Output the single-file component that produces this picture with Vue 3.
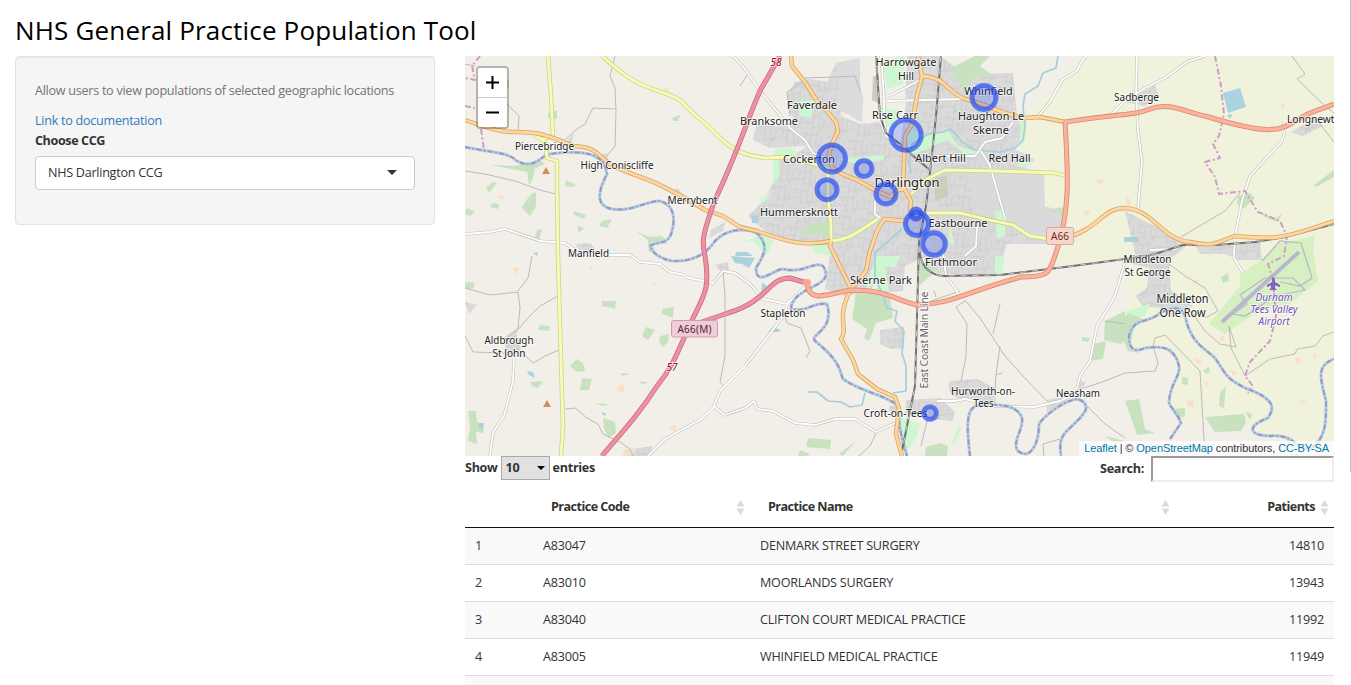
<script setup>
const rows = [
  { n: 1, code: 'A83047', name: 'DENMARK STREET SURGERY', patients: 14810 },
  { n: 2, code: 'A83010', name: 'MOORLANDS SURGERY', patients: 13943 },
  { n: 3, code: 'A83040', name: 'CLIFTON COURT MEDICAL PRACTICE', patients: 11992 },
  { n: 4, code: 'A83005', name: 'WHINFIELD MEDICAL PRACTICE', patients: 11949 },
]

const practices = [
  [367, 102.5, 13.5], [399, 112.5, 8], [362, 133.7, 10], [421, 138, 10],
  [441, 79, 15.2], [519, 41.5, 12], [451, 158, 5], [452, 168, 11.5],
  [469, 188, 11.3], [465, 357, 6.3],
]

// text, centre x, baseline y, drawn width, size
const places = [
  ['Piercebridge', 79.5, 94, 59, 11], ['High Coniscliffe', 152, 112.5, 73, 11],
  ['Merrybent', 227.5, 148, 50, 11], ['Faverdale', 347, 52.5, 50, 11],
  ['Branksome', 304, 69, 58, 11], ['Cockerton', 344, 107, 52, 11],
  ['Hummersknott', 334, 160, 78, 11], ['Rise Carr', 430, 63, 46, 11],
  ['Harrowgate', 441, 10, 61, 11], ['Hill', 441, 24, 16, 11],
  ['Whinfield', 523.5, 39, 48.5, 11], ['Haughton Le', 526, 64, 66, 11],
  ['Skerne', 526, 78, 36, 11], ['Albert Hill', 475.5, 106, 50.5, 11],
  ['Red Hall', 544.5, 106, 42, 11], ['Darlington', 442, 131, 65, 13],
  ['Eastbourne', 493, 171, 59, 11], ['Firthmoor', 486, 210, 52, 11],
  ['Skerne Park', 416, 228, 62, 11], ['Stapleton', 318, 261, 45, 10.5],
  ['Manfield', 123.5, 200.5, 41, 10.5], ['Aldbrough', 44, 288, 49, 10.5],
  ['St John', 44, 301, 33, 10.5], ['Sadberge', 671.5, 44.5, 45, 10.5],
  ['Longnewton', 852, 66.5, 60, 10.5], ['Middleton', 682.5, 206.5, 48, 10.5],
  ['St George', 682.5, 219.5, 46, 10.5], ['Middleton', 717.5, 247, 52, 12],
  ['One Row', 717.5, 261, 46, 12], ['Hurworth-on-', 518, 338.5, 64, 10.5],
  ['Tees', 518.5, 351, 20, 10.5], ['Neasham', 613, 341, 44, 10.5],
  ['Croft-on-Tees', 430.5, 361, 64, 10.5], ['Eryholme', 575, 408, 44, 10.5],
]
const airport = [['Durham', 809, 244.5, 37], ['Tees Valley', 809, 256.5, 47], ['Airport', 809, 268.5, 31]]

const built = [
  'M371 7L395 2 395 30 398 42 397 66 371 52 360 30Z',
  'M322 40L330 26 345 23 365 26 374 33 376 60 395 68 415 66 420 80 435 90 440 56 442 0 452 0 475 0 500 18 548 17 552 60 560 80 548 92 570 104 560 112 578 118 579 150 598 155 596 184 582 188 542 188 532 218 500 219 472 217 458 202 440 210 438 235 422 236 412 222 405 235 380 240 360 233 364 205 366 190 330 187 300 175 283 160 298 145 309 125 314 102 330 98 342 90 305 92 288 84 291 68 310 70 330 66 322 50Z',
  'M100 87L109 77 105 92Z', 'M110 188L125 187 133 197 118 199Z', 'M38 282L50 274 56 292 44 303Z',
  'M246 174L260 166 258 175 244 182Z', 'M250 209L263 206 264 217 258 218Z', 'M0 246L12 249 4 258Z',
  'M484 325L512 323 530 332 531 348 494 344 484 335Z', 'M441 344L475 342 490 356 487 365 440 360Z',
  'M582 344L605 339 600 348 582 356Z', 'M612 323L621 327 615 335Z', 'M424 350L435 349 433 359 425 357Z',
  'M660 46L690 29 694 40 680 50Z', 'M826 76L850 62 858 70 838 80Z',
  'M660 206L672 206 660 155 690 170 725 187 704 204 706 234 728 250 716 254 678 250 670 240 682 232 684 212Z',
  'M730 189L795 186 797 204 774 204 760 198 735 198Z', 'M160 394L187 390 186 400 158 400Z',
  'M415 274L439 271 439 292 426 293 415 288Z', 'M206 135L212 132 220 140 216 144Z', 'M136 99L142 97 144 105Z',
]
const woods = [
  'M486 12L510 0 525 0 515 10 528 20 510 22 497 34Z', 'M62 113L71 106 68 122 64 130Z',
  'M25 109L50 110 75 103 80 108 62 116 42 112Z', 'M66 138L71 136 71 150 65 160 57 152 60 146Z',
  'M72 174L77 173 74 184 69 184Z', 'M101 124L111 129 107 131 100 130Z', 'M109 155L121 159 119 163 108 158Z',
  'M113 170L119 172 113 177Z', 'M137 165L147 163 142 172 134 170Z', 'M21 132L28 126 32 127 24 137Z',
  'M2 152L10 156 5 160 0 158Z', 'M28 147L34 148 33 153 25 151Z', 'M171 175L186 182 190 195 184 196 183 184Z',
  'M137 245L151 245 150 253 137 250Z', 'M181 271L190 274 183 284 177 280Z', 'M195 280L204 278 203 286 198 291 194 286Z',
  'M197 253L209 251 208 262 197 258Z', 'M75 269L85 270 84 275 73 274Z', 'M112 303L118 307 120 315 112 316 105 310Z',
  'M117 322L127 323 124 334 115 334Z', 'M155 317L166 318 157 320Z', 'M175 325L184 327 176 328Z',
  'M65 326L78 325 73 332 67 330Z', 'M3 355L11 355 12 365 18 370 19 377 11 376 12 388 3 385 5 370Z',
  'M138 362L150 366 151 377 143 382 139 372Z', 'M130 347L144 348 138 350Z', 'M343 382L366 384 365 393 341 391Z',
  'M335 394L345 398 342 400 333 400Z', 'M374 398L392 384 383 394 378 400Z',
  'M391 236L410 235 425 240 428 262 411 267 404 285 399 282 402 273 387 263Z',
  'M461 391L475 387 483 390 482 400 460 400Z', 'M640 265L660 255 662 281 656 288 639 284Z',
  'M628 288L641 285 638 303 625 305Z', 'M617 281L625 282 623 286 617 285Z', 'M740 361L779 358 781 366 776 375 750 376Z',
  'M660 345L674 343 680 373 690 377 672 379Z', 'M755 337L761 330 759 352 754 350Z',
  'M657 264L664 257 680 264 670 268 665 290 675 297 663 295 657 282Z', 'M708 353L720 352 720 360 716 362 708 358Z',
  'M717 321L723 322 723 329 717 328Z', 'M738 314L744 311 745 316 741 318Z', 'M849 129L869 114 869 121 851 131Z',
  'M773 140L785 137 790 142 778 153 772 148Z', 'M793 155L810 163 818 157 812 166 800 161Z',
  'M84 55L92 55 92 63 83 62Z', 'M207 62L215 59 213 65 208 65Z', 'M455 204L472 214 454 230Z', 'M756 221L763 217 764 225 758 227Z',
  'M342 167L364 166 364 180 338 178Z', 'M580 155L598 151 598 157Z', 'M640 380L660 385 650 387Z', 'M181 181L197 180 203 188 190 187Z',
  'M780 355L787 358 785 364Z', 'M10 227L8 233 0 232 0 226Z', 'M38 23L44 24 44 32 39 33Z',
]
const parks = [
  'M334 45L350 44 346 62 334 60Z', 'M311 92L330 92 332 101 314 103 315 120 308 127 308 102Z',
  'M292 144L308 134 300 146Z', 'M372 103L400 101 420 99 418 104 388 107Z', 'M440 68L460 80 483 74 493 90 520 98 500 98 482 84 445 100Z',
  'M418 5L440 0 438 28 422 33 420 18Z', 'M412 200L435 200 430 212 420 210 424 238 411 240 412 224 400 237 406 215Z',
  'M280 185L300 178 308 185 302 200 288 185Z', 'M345 188L366 190 366 200 350 197Z', 'M530 155L541 155 540 180 532 182Z',
  'M556 62L562 58 560 85 554 92Z', 'M433 360L455 368 452 380 442 395 433 372Z', 'M530 200L540 200 537 218 530 217Z',
  'M485 170L490 188 484 188Z', 'M560 104L568 105 560 112 550 110Z', 'M415 50L436 55 430 72 420 70Z', 'M486 392L493 370 497 372 490 387Z',
  'M661 255L685 248 680 260 662 263Z',
]
const lakes = [
  'M758 37L775 32 781 51 763 57Z', 'M762 59L768 58 765 63Z', 'M266 200L290 202 284 212 277 208 270 207Z',
  'M297 226L302 230 300 236 296 237Z', 'M308 271L316 274 313 276 303 276Z', 'M286 160L294 159 293 167 287 167Z',
  'M659 181L674 181 674 186 659 186Z', 'M62 315L68 316 70 322 64 319Z', 'M14 367L19 367 18 373 14 372Z', 'M68 197L73 196 72 200Z',
  'M271 196L282 196 288 200 270 200Z', 'M136 356L142 358 139 360Z',
]
const peach = [
  'M33 139L39 140 38 144 34 143Z', 'M198 33L203 32 203 37 199 37Z', 'M93 139L96 144 92 144Z', 'M48 211L54 212 52 218 49 216Z',
  'M187 226L191 228 189 231Z', 'M152 331L158 329 160 335 154 336Z', 'M205 371L211 369 211 376 205 374Z', 'M136 283L140 284 137 285Z',
  'M628 124L641 124 636 128Z', 'M618 155L626 155 621 160Z', 'M661 141L666 144 665 149 661 148Z', 'M728 225L734 223 732 228Z',
  'M729 302L738 304 732 309Z', 'M738 325L745 327 741 330Z', 'M722 344L729 345 728 351 722 350Z', 'M755 281L759 280 760 285 755 285Z',
  'M765 313L772 317 768 320Z', 'M830 301L838 304 832 309Z', 'M848 298L853 301 849 303Z', 'M836 343L842 346 836 348Z',
  'M815 47L820 48 818 53Z', 'M160 395L172 393 165 400 157 400Z', 'M124 212L127 211 127 215Z',
]
const minor = [
  'M150 0L145 20 150 32 151 55 150 90 142 100', 'M100 84L112 73 120 68 128 52 150 53', 'M0 115L20 118 50 125 75 134 90 138',
  'M42 48L54 60 53 76', 'M67 200L63 222 53 235', 'M0 232L25 239 53 236 55 252 53 272 42 282', 'M93 240L75 250 62 263 50 277',
  'M0 280L8 296 40 297', 'M52 292L68 307 80 300 94 294', 'M100 353L110 352 122 362 133 368 138 378 155 386 165 393 168 400',
  'M258 215L260 240 260 300 255 326 260 331', 'M320 260L322 267 336 272 345 295 341 302', 'M411 377L405 390 394 400',
  'M469 235L471 241 M466 245L495 235', 'M500 245L491 251 502 268 501 300 496 325', 'M500 244L515 262 540 300 558 320 582 345',
  'M535 248L528 278 M535 290L531 319 537 317 M531 319L530 335', 'M456 390L462 365 475 362', 'M620 348L640 368 660 382',
  'M610 335L640 325 660 317', 'M579 400L578 388 595 383', 'M640 265L660 268', 'M716 181L760 155 775 137', 'M827 0L840 18 832 23 860 50 869 57',
  'M660 317L690 315 693 307 688 290 690 282 700 279 735 315 740 400', 'M726 255L740 275 755 288 771 291 764 270 766 292 780 320',
  'M780 320L805 303 830 298 832 293 850 290 858 280 869 276', 'M700 205L720 220 740 232 753 255 740 262', 'M855 68L869 86',
  'M340 24L322 36 325 60 M340 22L370 21 390 20 395 35 M275 30L283 18', 'M0 8L10 10 M850 62L840 76',
]
const white = [
  'M0 178L25 176 40 173 55 178 75 185 100 187 115 198 145 199 165 199 175 206 195 208 205 216 220 219',
  'M49 303L48 325 39 360 28 376 25 400', 'M268 0L280 13 295 35 310 53 325 72 340 84 348 97 363 103',
  'M220 221L248 227 258 215 270 217 285 228 298 243 322 248', 'M342 229L322 248 320 258 280 310 255 335 248 352 235 364 220 372',
  'M248 350L260 359 280 352 289 345 292 353 308 355 330 367 350 369 370 363 390 363 411 376 430 367',
  'M183 400L200 383 220 372', 'M424 40L440 32 455 24', 'M416 0L419 40 419 60 421 80', 'M422 45L500 43', 'M466 108L475 100 510 100 520 86 537 82 548 66',
  'M516 95L525 110 540 162', 'M573 60L585 46 597 24 612 15 618 3 622 0', 'M645 60L660 45 680 32 700 22 722 6 740 0',
  'M672 0L671 35 673 75 677 105 673 152', 'M818 75L819 66 M820 75L817 85 785 120 777 145 770 180 769 200',
  'M660 206L650 240 632 270 625 305 615 320 612 332', 'M472 345L490 345 500 343 530 350 570 351 595 345 610 338',
  'M478 196L481 220 493 237', 'M512 170L511 190 500 200', 'M410 145L410 158 415 162', 'M685 194L710 193 718 188', 'M768 200L778 217',
]
const yellow = [
  'M83 0L86 40 88 80 75 84M70 79L80 86 82 102 92 105 92 130 93 200 95 270 97 340 98 370 96 400',
  'M137 0C155 16 168 26 185 32C203 39 212 40 220 49C232 62 240 66 250 77C268 96 280 99 300 102L325 101 345 107 363 112 363 140 366 170 366 185',
  'M366 185C388 183 398 172 413 163', 'M446 138L462 123 480 114 530 115 590 117 601 120', 'M462 157L495 157 520 163 548 169 565 180 585 183',
]
const orange = [
  'M0 64C25 73 35 76 50 76C80 76 88 82 108 90C132 91 132 99 145 108C165 119 177 120 195 129L220 142 240 154 258 160 275 171 292 175C325 187 340 190 366 185',
  'M326 0L327 10 340 26 352 45 362 55 371 66 373 75 366 90 364 98 367 112 375 117 392 124 410 134 425 141 433 134 440 133',
  'M366 185L365 190 371 202 386 233C370 262 384 272 376 283L388 304 393 318 412 333 430 341 434 352 431 378 437 400',
  'M386 233L401 215 405 195 412 175 419 163 440 165', 'M453 0L457 20 452 40 447 68 440 80 439 105 438 130 446 145 445 155 452 165',
  'M457 20C483 22 480 35 500 43C524 48 533 58 560 62L575 61 600 66',
  'M598 183C635 173 637 152 660 152C690 154 695 183 725 186C751 192 756 184 770 180C810 184 820 181 845 173L869 165',
]
const red = [
  'M342 227C344 249 365 237 386 234C423 234 427 243 452 249C487 248 503 235 556 221C585 221 584 216 590 200C606 155 603 118 600 65',
  'M600 66C660 57 671 59 685 53C703 46 718 55 740 60C820 84 814 72 845 57L869 48',
]
const motorway = [
  'M315 0L296 33C284 58 276 89 250 144C236 182 237 188 240 200C245 232 240 238 228 262C215 290 209 310 192 330C174 358 159 374 137 400',
  'M234 267L263 257C305 244 303 222 325 222L342 227',
]
const tees = [
  'M0 91C28 97 43 96 52 105C70 114 73 101 85 98C130 92 140 103 142 118C132 137 131 150 147 153C168 156 180 145 195 145C210 149 210 164 207 175C204 190 190 185 185 190C188 199 198 203 207 205C225 206 240 200 250 185C265 170 286 173 293 178C303 190 301 196 291 212C291 232 309 213 318 213C340 218 347 205 358 210C373 232 327 229 326 253C342 257 347 246 362 248C370 275 344 278 350 285C378 307 375 318 378 323C398 337 422 339 433 350C434 371 436 380 442 400',
  'M505 400C502 375 500 352 512 350C543 346 554 353 557 362C559 374 546 386 553 395C565 405 574 388 574 368C579 360 599 344 613 343C630 350 617 360 605 372C593 382 595 390 596 400',
  'M705 383L716 367C711 354 703 350 704 345C706 325 716 320 714 310C709 290 697 290 680 292C667 298 664 290 664 280C669 260 684 268 695 257C709 250 717 251 720 260C726 288 740 292 750 302C762 319 759 321 780 332C814 344 808 354 803 362C779 371 786 380 805 380C828 377 832 394 845 393C862 382 861 365 861 345C856 324 850 310 869 303',
]
const streams = [
  'M593 0L591 12 578 17 573 30 560 38 558 50 560 70 558 84 550 92 535 96 510 94 497 86 492 79 485 73 478 76 463 78 447 88 444 105 446 117',
  'M437 173L420 188 410 197 410 220 418 240 422 252 432 255 430 265 439 275 437 297 441 310 441 335 428 337',
  'M343 336L352 336 363 345 376 346 385 351 397 349 400 337',
]
const rails = [
  'M476 0L471 60 466 108 461 150 454 185 452 260 450 330 443 365 436 400',
  'M411 0L413 30 415 60 421 77 435 88 446 98 466 115',
  'M454 190Q455 219 480 220L535 219 600 211 660 203 690 198 718 189 750 189 790 186 820 181 869 168',
]
const boundaries = [
  'M15 0L7 10 10 24 0 22M0 50L10 52M16 73L19 94',
  'M750 0L756 30 759 58 754 80 748 88 755 102 740 106 750 121 754 138 780 135 793 156 815 165 822 180 819 200 803 208 808 224 811 260 805 285 785 306 780 320 787 329 783 337',
]
</script>

<template>
  <div class="page">
    <main class="content">
      <h1 class="title">NHS General Practice Population Tool</h1>
      <div class="columns">
        <aside class="well">
          <p class="help">Allow users to view populations of selected geographic locations</p>
          <a class="doc">Link to documentation</a>
          <label class="choose">Choose CCG</label>
          <div class="picker"><span>NHS Darlington CCG</span><i class="caret"></i></div>
        </aside>

        <section class="results">
          <div class="map">
            <svg class="tiles" width="869" height="400" viewBox="0 0 869 400">
              <defs>
                <pattern id="streets" width="23" height="19" patternUnits="userSpaceOnUse" patternTransform="rotate(9)">
                  <rect width="23" height="19" fill="#dadada" />
                  <path d="M0 4H15M9 4V19M0 12H9M15 0V14H23M18 14V19M9 16H18M4 4V9M20 5V14" fill="none" stroke="#cbcbcb" stroke-width=".9" />
                </pattern>
              </defs>
              <rect width="869" height="400" fill="#f2efe9" />
              <path d="M622 0H869V400L840 395 805 380 788 375 780 362 745 358 720 367 705 345 714 310 700 292 668 294 664 275 660 204 588 210 601 160 580 160 579 118 556 104 561 62 580 40 596 22Z" fill="#f0f2dc" />
              <path v-for="d in built" :key="d" :d="d" fill="url(#streets)" />
              <path d="M579 118L558 112 505 118 508 155 548 168 575 182 598 184 598 155 580 152Z" fill="#dadada" />
              <path d="M371 7L395 2 393 33 397 42 397 66 371 52 374 32Z" fill="#dcdcdc" />
              <path d="M408 20H414V48L407 44ZM470 122L482 120 483 140 470 145Z" fill="#cbccb9" />
              <path v-for="d in parks" :key="d" :d="d" fill="#cdf7d0" />
              <path v-for="d in woods" :key="d" :d="d" fill="#c8e2bf" />
              <path v-for="d in peach" :key="d" :d="d" fill="#fbdfc4" />
              <path d="M744 268L775 230 775 218 795 205 815 187 850 180 848 195 853 225 825 248 795 254 760 278Z" fill="#d7f0c2" />
              <path d="M775 239L800 222 828 222 840 234 810 240 780 260 768 258 782 248ZM797 205L815 185 836 187 847 222 835 230 815 226" fill="none" stroke="#b8b3cb" stroke-width="1.2" />
              <path d="M757 266L834 196" stroke="#bab7cc" stroke-width="4" />
              <path v-for="d in lakes" :key="d" :d="d" fill="#aad3df" />
              <g class="line">
                <path v-for="d in streams" :key="d" :d="d" stroke="#a5cfdc" stroke-width="1.7" />
                <path v-for="d in minor" :key="d" :d="d" stroke="#bdbbb8" stroke-width="1" />
                <path v-for="d in white" :key="d" :d="d" stroke="#c2c0bd" stroke-width="3" />
                <path v-for="d in white" :key="d + 'w'" :d="d" stroke="#fff" stroke-width="1.8" />
                <path v-for="d in tees" :key="d" :d="d" stroke="#a5cfdc" stroke-width="3" />
                <path v-for="d in tees" :key="d + 'b'" :d="d" stroke="#a98bc8" stroke-width="1.8" stroke-dasharray="5 2.5 1.5 2.5" />
                <path v-for="d in boundaries" :key="d" :d="d" stroke="#cf9cc9" stroke-width="2" stroke-dasharray="6 2.5 2 2.5" />
                <path v-for="d in rails" :key="d" :d="d" stroke="#707070" stroke-width="2" />
                <path v-for="d in rails" :key="d + 'd'" :d="d" stroke="#c9c9c9" stroke-width="1" stroke-dasharray="6 6" />
                <path v-for="d in yellow" :key="d" :d="d" stroke="#cfd484" stroke-width="4.4" />
                <path v-for="d in yellow" :key="d + 'y'" :d="d" stroke="#f6fabb" stroke-width="2.8" />
                <path v-for="d in orange" :key="d" :d="d" stroke="#dba457" stroke-width="4.4" />
                <path v-for="d in orange" :key="d + 'o'" :d="d" stroke="#fcd6a4" stroke-width="2.8" />
                <path v-for="d in red" :key="d" :d="d" stroke="#e2856f" stroke-width="5" />
                <path v-for="d in red" :key="d + 'r'" :d="d" stroke="#f9b29c" stroke-width="3.4" />
                <path v-for="d in motorway" :key="d" :d="d" stroke="#d2607b" stroke-width="5" />
                <path v-for="d in motorway" :key="d + 'm'" :d="d" stroke="#e892a2" stroke-width="3.6" />
              </g>
              <circle cx="342" cy="227" r="4" fill="#f9a793" />
              <path d="M81 111L85 118H77ZM82 344L86 351H78Z" fill="#d08f55" />
              <path d="M808 221L810 223V226L815 229V231L810 229.500V232L812 234H804L806 232V229.500L802 231V229L807 226V223Z" fill="#8461c4" />
              <rect x="206.500" y="264.500" width="46" height="16.500" rx="2" fill="#edcdd6" stroke="#d89aab" />
              <text class="shield" x="229.500" y="276.500" fill="#62143a" textLength="34">A66(M)</text>
              <rect x="581.500" y="171.500" width="27" height="17" rx="2" fill="#f5d6cd" stroke="#dba899" />
              <text class="shield" x="595" y="184" fill="#702c23" textLength="18">A66</text>
              <g class="junction"><text x="311" y="10">58</text><text x="207" y="315">57</text></g>
              <text class="railname" transform="translate(463 284) rotate(-90)" textLength="97">East Coast Main Line</text>
              <g class="places">
                <text v-for="(p, i) in places" :key="i" :x="p[1]" :y="p[2]" :textLength="p[3]" :font-size="p[4]" lengthAdjust="spacingAndGlyphs">{{ p[0] }}</text>
              </g>
              <g class="airport">
                <text v-for="a in airport" :key="a[0]" :x="a[1]" :y="a[2]" :textLength="a[3]" lengthAdjust="spacingAndGlyphs">{{ a[0] }}</text>
              </g>
              <circle v-for="(c, i) in practices" :key="i" :cx="c[0]" :cy="c[1]" :r="c[2]" fill="#03f" fill-opacity=".2" stroke="#2b50f2" stroke-opacity=".7" stroke-width="5" />
            </svg>
            <div class="zoom">
              <button><svg width="13" height="13"><path d="M0 6.500H13M6.500 0V13" stroke="#000" stroke-width="2" /></svg></button>
              <button><svg width="13" height="13"><path d="M0 6.500H13" stroke="#000" stroke-width="2" /></svg></button>
            </div>
            <div class="credit"><a>Leaflet</a> | © <a>OpenStreetMap</a> contributors, <a>CC-BY-SA</a></div>
          </div>

          <div class="toolbar">
            <div class="length">Show <span class="count">10<i class="caret"></i></span> entries</div>
            <label class="search">Search:<input type="text" /></label>
          </div>

          <table class="grid">
            <colgroup><col class="c1" /><col class="c2" /><col class="c3" /><col class="c4" /></colgroup>
            <thead>
              <tr>
                <th></th>
                <th v-for="h in ['Practice Code', 'Practice Name', 'Patients']" :key="h" :class="{ num: h === 'Patients' }">
                  <div class="head"><span>{{ h }}</span><svg width="9" height="15"><path d="M4.500 0L8.500 6.500H.5ZM4.500 15L8.500 8.500H.5Z" fill="#d9d9d9" /></svg></div>
                </th>
              </tr>
            </thead>
            <tbody>
              <tr v-for="r in rows" :key="r.n">
                <td>{{ r.n }}</td><td>{{ r.code }}</td><td>{{ r.name }}</td><td class="num">{{ r.patients }}</td>
              </tr>
              <tr><td colspan="4"></td></tr>
            </tbody>
          </table>
        </section>
      </div>
    </main>
    <div class="edge"></div>
  </div>
</template>

<style>
html, body { margin: 0; overflow: hidden; background: #fff; }
</style>

<style scoped>
.page { display: flex; width: 1351px; height: 685px; overflow: hidden; font: 12.600px/20px "Open Sans", "Noto Sans", sans-serif; letter-spacing: -.27px; color: #333; }
.page * { box-sizing: border-box; }
.content { width: 1350px; flex: none; padding: 0 16px 0 15px; }
.edge { width: 1px; height: 472px; background: #c4c4c4; }
.title { margin: 0; height: 56px; padding-top: 12px; font-size: 26px; line-height: 36px; font-weight: 400; letter-spacing: .17px; color: #000; white-space: nowrap; }
.columns { display: flex; gap: 30px; align-items: flex-start; }
.well { width: 420px; height: 169px; padding: 24px 19px 0; background: #f5f5f5; border: 1px solid #e3e3e3; border-radius: 4px; box-shadow: inset 0 1px 1px rgba(0,0,0,.05); display: flex; flex-direction: column; }
.help { margin: 0 0 10px; color: #737373; white-space: nowrap; }
.doc { color: #337ab7; }
.choose { font-weight: 700; letter-spacing: -.4px; margin-bottom: 5px; }
.picker { display: flex; align-items: center; justify-content: space-between; height: 34px; padding: 0 17px 1px 12px; border: 1px solid #ccc; border-radius: 4px; background: #fff; }
.caret { border: 5px solid transparent; border-top-color: currentColor; border-bottom: 0; }
.results { width: 869px; }
.map { position: relative; height: 400px; overflow: hidden; }
.tiles { display: block; font-family: "Noto Sans", sans-serif; letter-spacing: 0; }
.line path { fill: none; stroke-linejoin: round; }
.tiles text { text-anchor: middle; paint-order: stroke; stroke: rgba(255,255,255,.65); stroke-width: 2px; stroke-linejoin: round; }
.places { fill: #222; }
.airport { font-size: 10px; font-style: italic; fill: #7650b8; }
.tiles .shield { font-size: 10px; stroke: none; }
.junction { font-size: 10px; font-style: italic; fill: #96002c; }
.railname { font-size: 10.500px; fill: #666; }
.zoom { position: absolute; left: 10.500px; top: 10px; width: 33px; height: 63px; border: 2px solid rgba(0,0,0,.25); border-radius: 4px; background-clip: padding-box; overflow: hidden; display: flex; flex-direction: column; }
.zoom button { flex: 1; display: grid; place-items: center; border: 0; background: #fff; padding: 0; }
.zoom button + button { border-top: 1px solid #ccc; }
.credit { position: absolute; right: 0; bottom: 0; height: 15px; width: 255px; padding: 0 5px; font: 11px/15px "Liberation Sans", Arial, sans-serif; letter-spacing: -.09px; text-align: right; white-space: nowrap; background: rgba(255,255,255,.7); }
.credit a { color: #0078a8; }
.toolbar { display: flex; justify-content: space-between; height: 31px; font-weight: 700; letter-spacing: -.3px; }
.length { display: flex; gap: 3px; line-height: 24px; }
.count { display: inline-flex; align-items: center; justify-content: space-between; width: 49px; height: 24px; padding: 0 4px; border: 1px solid #a9a9a9; background: #e1e1e1; }
.count .caret { border-width: 4px 4px 0; color: #000; }
.search { display: flex; line-height: 26px; gap: 7px; }
.search input { width: 183px; height: 26px; border: 2px solid; border-color: #9a9a9a #ededed #ededed #9a9a9a; background: #fff; padding: 0; }
.grid { width: 869px; table-layout: fixed; border-collapse: separate; border-spacing: 0; }
.c1 { width: 68px; } .c2 { width: 217px; } .c3 { width: 425px; } .c4 { width: 159px; }
th { height: 41px; padding: 0 5px 0 18px; border-bottom: 1px solid #111; text-align: left; font-weight: 700; letter-spacing: -.55px; }
.head { display: flex; justify-content: space-between; align-items: center; }
.num .head { justify-content: flex-end; gap: 5px; }
td { height: 37px; padding: 0 10px; border-bottom: 1px solid #ddd; letter-spacing: -.22px; }
td.num { text-align: right; }
tbody tr:nth-child(odd) td { background: #f9f9f9; }
</style>
